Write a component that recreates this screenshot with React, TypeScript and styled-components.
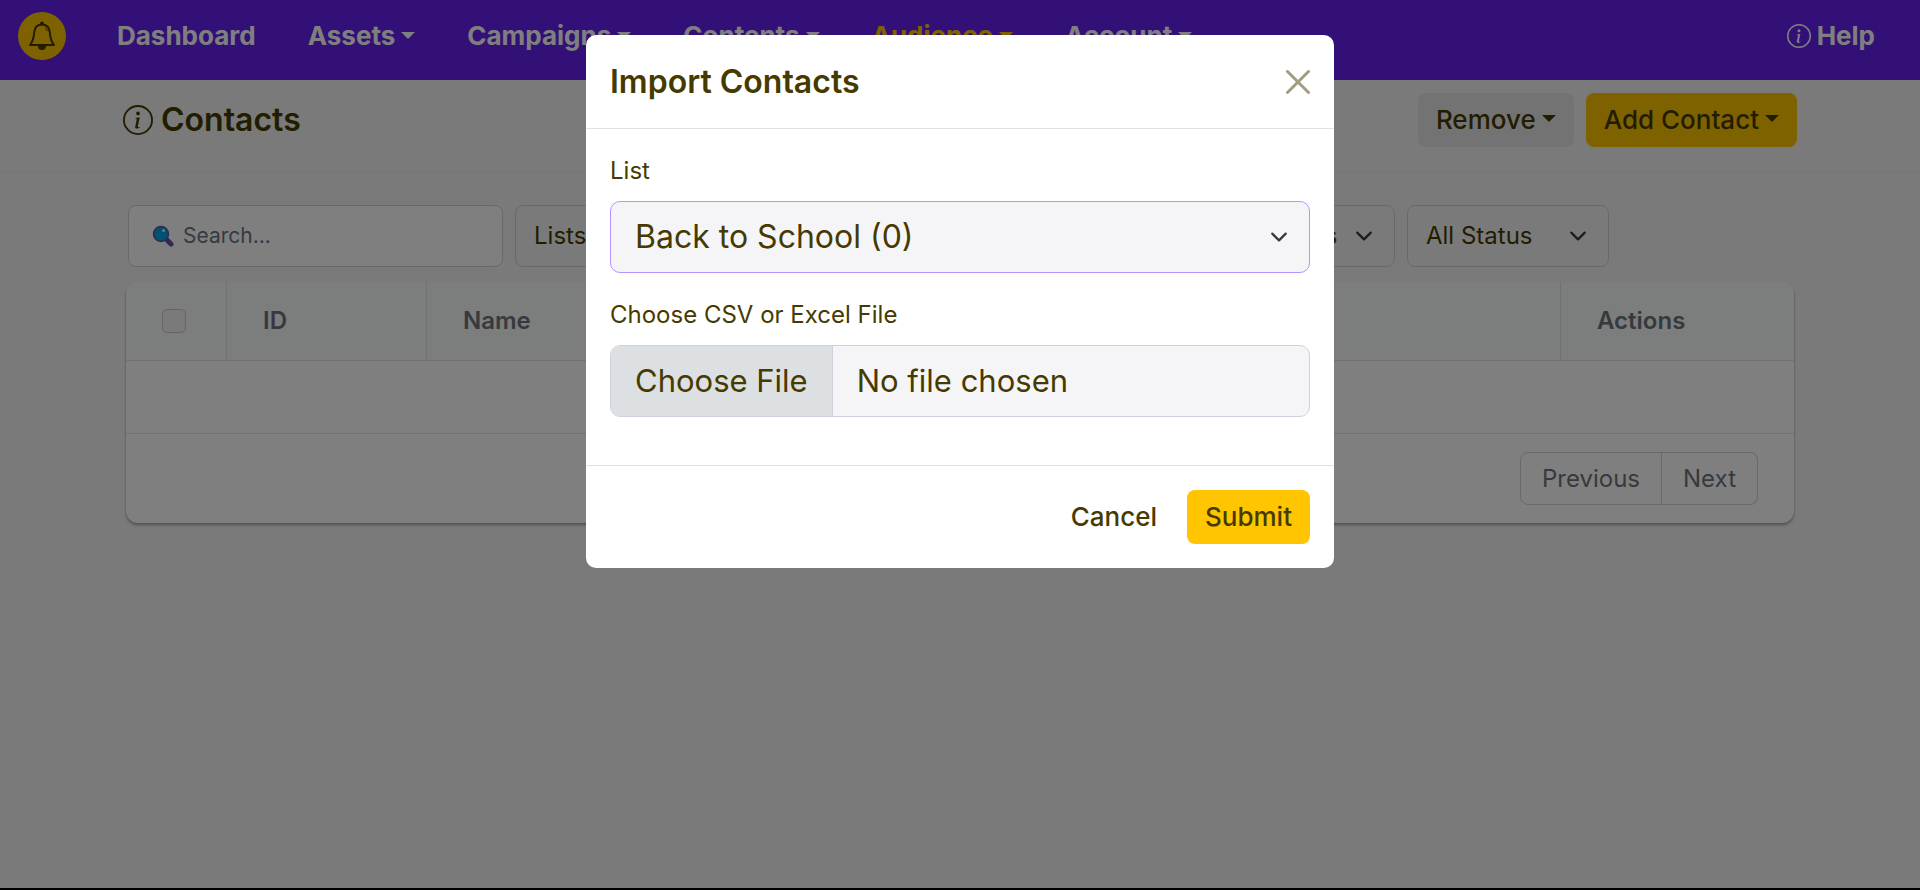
import React from "react";
import styled, { createGlobalStyle, css } from "styled-components";
import { BsInfoCircle } from "react-icons/bs";

const ink = "#463a00";
const muted = "#6c757d";
const line = "#dee2e6";
const yellow = "#ffc500";

const GlobalStyle = createGlobalStyle`
  *, *::before, *::after { box-sizing: border-box; }
  body {
    margin: 0;
    background: #f5f5f5;
    color: ${ink};
    font-family: Inter, "Open Sans", sans-serif;
    font-size: 24px;
    line-height: 36px;
  }
  button, input, select { font: inherit; color: inherit; margin: 0; }
`;

const Page = styled.div`
  min-height: 100vh;
  border-bottom: 2px solid #000;
`;

const TopBar = styled.header`
  display: flex;
  align-items: center;
  height: 80px;
  padding: 0 45px 8px 18px;
  background: #6620f0;
`;

const BellButton = styled.button`
  display: grid;
  place-items: center;
  width: 48px;
  height: 48px;
  padding: 0;
  border: 0;
  border-radius: 50%;
  background: ${yellow};
`;

const Nav = styled.nav`
  display: flex;
  flex: 1;
  gap: 52px;
  margin-left: 51px;
`;

const NavLink = styled.a<{ $active?: boolean }>`
  display: flex;
  align-items: center;
  gap: 6px;
  font-size: 26px;
  font-weight: 700;
  text-decoration: none;
  color: ${(p) => (p.$active ? yellow : "#fff")};
`;

const Caret = styled.span`
  margin-bottom: 2px;
  border: 7px solid transparent;
  border-top-color: currentColor;
  border-bottom-width: 0;
`;

const TitleBar = styled.div`
  display: flex;
  align-items: center;
  justify-content: space-between;
  height: 92px;
  padding: 0 123px 12px;
  border-bottom: 1px solid #e9ebee;
`;

const PageTitle = styled.h1`
  display: flex;
  align-items: center;
  gap: 8px;
  margin: 0;
  font-size: 32px;
  font-weight: 600;
`;

const Actions = styled.div`
  display: flex;
  gap: 12px;
`;

const Button = styled.button<{ $tone?: "primary" | "light" | "plain" }>`
  display: flex;
  align-items: center;
  gap: 6px;
  height: 54px;
  padding: 0 18px;
  border: 0;
  border-radius: 8px;
  font-size: 26px;
  font-weight: 500;
  background: ${(p) =>
    p.$tone === "primary" ? yellow : p.$tone === "light" ? "#e7e7e7" : "transparent"};
`;

const Content = styled.main`
  padding: 33px 126px;
`;

const Filters = styled.div`
  display: flex;
  gap: 12px;
  padding: 0 185px 0 2px;
  margin-bottom: 15px;
`;

const fieldBox = css`
  height: 62px;
  border: 1px solid #d0d2d6;
  border-radius: 8px;
`;

const SearchBox = styled.label`
  ${fieldBox}
  display: flex;
  align-items: center;
  gap: 9px;
  width: 375px;
  padding: 0 23px;
  background: #fff;
`;

const SearchInput = styled.input`
  flex: 1;
  min-width: 0;
  padding: 0;
  border: 0;
  outline: 0;
  background: none;
  font-size: 21px;
  &::placeholder { color: ${muted}; opacity: 1; }
`;

const SelectShell = styled.div<{ $push?: boolean }>`
  display: grid;
  align-items: center;
  margin-left: ${(p) => (p.$push ? "auto" : "0")};
  > * { grid-area: 1 / 1; }
  > svg { justify-self: end; margin-right: 22px; pointer-events: none; }
`;

const FilterSelect = styled.select`
  ${fieldBox}
  appearance: none;
  min-width: 100%;
  padding: 0 56px 0 18px;
  background: transparent;
  font-size: 24px;
`;

const StatusShell = styled(SelectShell)`
  width: 202px;
`;

const Card = styled.section`
  overflow: hidden;
  border-radius: 12px;
  background: #fff;
  box-shadow: 0 2px 3px rgba(0, 0, 0, 0.35);
`;

const Table = styled.table`
  width: 100%;
  table-layout: fixed;
  border-collapse: separate;
  border-spacing: 0;
`;

const HeadCell = styled.th<{ $width?: number }>`
  width: ${(p) => (p.$width ? `${p.$width}px` : "auto")};
  height: 79px;
  padding: 0 36px;
  border-bottom: 1px solid ${line};
  background: #f7fcf9;
  color: ${muted};
  font-weight: 600;
  font-size: 24px;
  text-align: left;
  & + & { border-left: 1px solid ${line}; }
`;

const EmptyCell = styled.td`
  height: 73px;
  border-bottom: 1px solid ${line};
`;

const Check = styled.input`
  appearance: none;
  display: block;
  width: 24px;
  height: 24px;
  border: 1px solid #cdc8c0;
  border-radius: 5px;
  background: #f5f5f5;
`;

const CardFooter = styled.div`
  display: flex;
  justify-content: flex-end;
  padding: 18px 36px;
`;

const PageButton = styled.button`
  height: 53px;
  padding: 0 21px;
  border: 1px solid #d0d2d6;
  background: #fff;
  color: ${muted};
  &:first-child { border-radius: 8px 0 0 8px; }
  &:last-child { border-left: 0; border-radius: 0 8px 8px 0; }
`;

const Backdrop = styled.div`
  position: fixed;
  inset: 0;
  padding: 35px 16px;
  background: rgba(0, 0, 0, 0.5);
`;

const Dialog = styled.section`
  width: 100%;
  max-width: 748px;
  margin: 0 auto;
  border-radius: 10px;
  background: #fff;
`;

const DialogHead = styled.div`
  display: flex;
  align-items: center;
  justify-content: space-between;
  padding: 24px;
  border-bottom: 1px solid ${line};
`;

const DialogTitle = styled.h2`
  margin: 0;
  font-size: 32px;
  line-height: 45px;
  font-weight: 600;
`;

const CloseButton = styled.button`
  display: flex;
  padding: 0;
  border: 0;
  background: none;
  color: #a29c80;
`;

const DialogBody = styled.div`
  display: grid;
  gap: 24px;
  padding: 24px 24px 48px;
`;

const Field = styled.div`
  display: grid;
  gap: 12px;
`;

const controlBox = css`
  width: 100%;
  height: 72px;
  border-radius: 10px;
  background: #f5f5f8;
  line-height: 46px;
`;

const ListSelect = styled.select`
  ${controlBox}
  appearance: none;
  padding: 0 60px 0 24px;
  border: 1px solid #b694ff;
  outline: 0;
  font-size: 32px;
`;

const FileInput = styled.input`
  ${controlBox}
  padding: 12px 24px;
  border: 1px solid #ced1dc;
  overflow: hidden;
  font-size: 31px;
  &::file-selector-button {
    margin: -12px 24px -12px -24px;
    padding: 12px 24px;
    border: 0;
    border-right: 1px solid #ced1dc;
    background: #dce0e3;
    color: inherit;
    font: inherit;
  }
`;

const DialogFoot = styled.div`
  display: flex;
  justify-content: flex-end;
  gap: 12px;
  padding: 24px;
  border-top: 1px solid ${line};
`;

const Bell = () => (
  <svg width="28" height="30" viewBox="0 0 28 30" fill="none" stroke={ink} strokeWidth="2" aria-hidden="true">
    <path d="M14 3.5c-4.800 0-7.400 3.400-7.800 7.800-.4 5.200-.9 9-4.200 12.700h24c-3.300-3.700-3.800-7.500-4.200-12.700C21.400 6.900 18.800 3.500 14 3.500Z" strokeLinejoin="round" />
    <path d="M17 6.500c1.200.7 2 1.900 2.300 3.500" strokeWidth="1" />
    <circle cx="14" cy="2.500" r="2" fill={ink} stroke="none" />
    <path d="M10 25h8a4 4 0 0 1-8 0Z" fill={ink} stroke="none" />
  </svg>
);

const Magnifier = () => (
  <svg width="22" height="22" viewBox="0 0 22 22" aria-hidden="true">
    <path d="m14 14 5 5" stroke="#65549c" strokeWidth="5" strokeLinecap="round" />
    <circle cx="9" cy="9" r="7.500" fill="#00a2e8" stroke="#65549c" strokeWidth="1.500" />
    <circle cx="11.500" cy="5.500" r="1.500" fill="#d8f1ff" />
  </svg>
);

const Chevron = () => (
  <svg width="18" height="18" viewBox="0 0 16 16" fill="none" stroke="#343a40" strokeWidth="2" strokeLinecap="round" strokeLinejoin="round" aria-hidden="true">
    <path d="m2 5 6 6 6-6" />
  </svg>
);

const Cross = () => (
  <svg width="24" height="24" viewBox="0 0 24 24" stroke="currentColor" strokeWidth="3" strokeLinecap="round" aria-hidden="true">
    <path d="m1.500 1.500 21 21m0-21-21 21" />
  </svg>
);

const menus = ["Assets", "Campaigns", "Contents", "Audience", "Account"];

export default function App() {
  return (
    <>
      <GlobalStyle />
      <Page>
        <TopBar>
          <BellButton aria-label="Notifications"><Bell /></BellButton>
          <Nav>
            <NavLink href="#">Dashboard</NavLink>
            {menus.map((name) => (
              <NavLink key={name} href="#" $active={name === "Audience"}>
                {name}
                <Caret />
              </NavLink>
            ))}
          </Nav>
          <NavLink href="#"><BsInfoCircle size={24} />Help</NavLink>
        </TopBar>
        <TitleBar>
          <PageTitle><BsInfoCircle size={30} />Contacts</PageTitle>
          <Actions>
            <Button $tone="light">Remove<Caret /></Button>
            <Button $tone="primary">Add Contact<Caret /></Button>
          </Actions>
        </TitleBar>
        <Content>
          <Filters>
            <SearchBox>
              <Magnifier />
              <SearchInput placeholder="Search..." aria-label="Search" />
            </SearchBox>
            <SelectShell>
              <FilterSelect aria-label="Lists"><option>Lists</option></FilterSelect>
              <Chevron />
            </SelectShell>
            <SelectShell $push>
              <FilterSelect aria-label="Tags"><option>All Tags</option></FilterSelect>
              <Chevron />
            </SelectShell>
            <StatusShell>
              <FilterSelect aria-label="Status"><option>All Status</option></FilterSelect>
              <Chevron />
            </StatusShell>
          </Filters>
          <Card>
            <Table>
              <thead>
                <tr>
                  <HeadCell $width={100}><Check type="checkbox" aria-label="Select all contacts" /></HeadCell>
                  <HeadCell $width={200}>ID</HeadCell>
                  <HeadCell $width={360}>Name</HeadCell>
                  <HeadCell>Email</HeadCell>
                  <HeadCell $width={234}>Actions</HeadCell>
                </tr>
              </thead>
              <tbody>
                <tr><EmptyCell colSpan={5} /></tr>
              </tbody>
            </Table>
            <CardFooter>
              <PageButton>Previous</PageButton>
              <PageButton>Next</PageButton>
            </CardFooter>
          </Card>
        </Content>
      </Page>
      <Backdrop>
        <Dialog role="dialog" aria-modal="true" aria-labelledby="import-title">
          <DialogHead>
            <DialogTitle id="import-title">Import Contacts</DialogTitle>
            <CloseButton aria-label="Close"><Cross /></CloseButton>
          </DialogHead>
          <DialogBody>
            <Field>
              <label htmlFor="import-list">List</label>
              <SelectShell>
                <ListSelect id="import-list"><option>Back to School (0)</option></ListSelect>
                <Chevron />
              </SelectShell>
            </Field>
            <Field>
              <label htmlFor="import-file">Choose CSV or Excel File</label>
              <FileInput id="import-file" type="file" accept=".csv,.xls,.xlsx" />
            </Field>
          </DialogBody>
          <DialogFoot>
            <Button>Cancel</Button>
            <Button $tone="primary">Submit</Button>
          </DialogFoot>
        </Dialog>
      </Backdrop>
    </>
  );
}
